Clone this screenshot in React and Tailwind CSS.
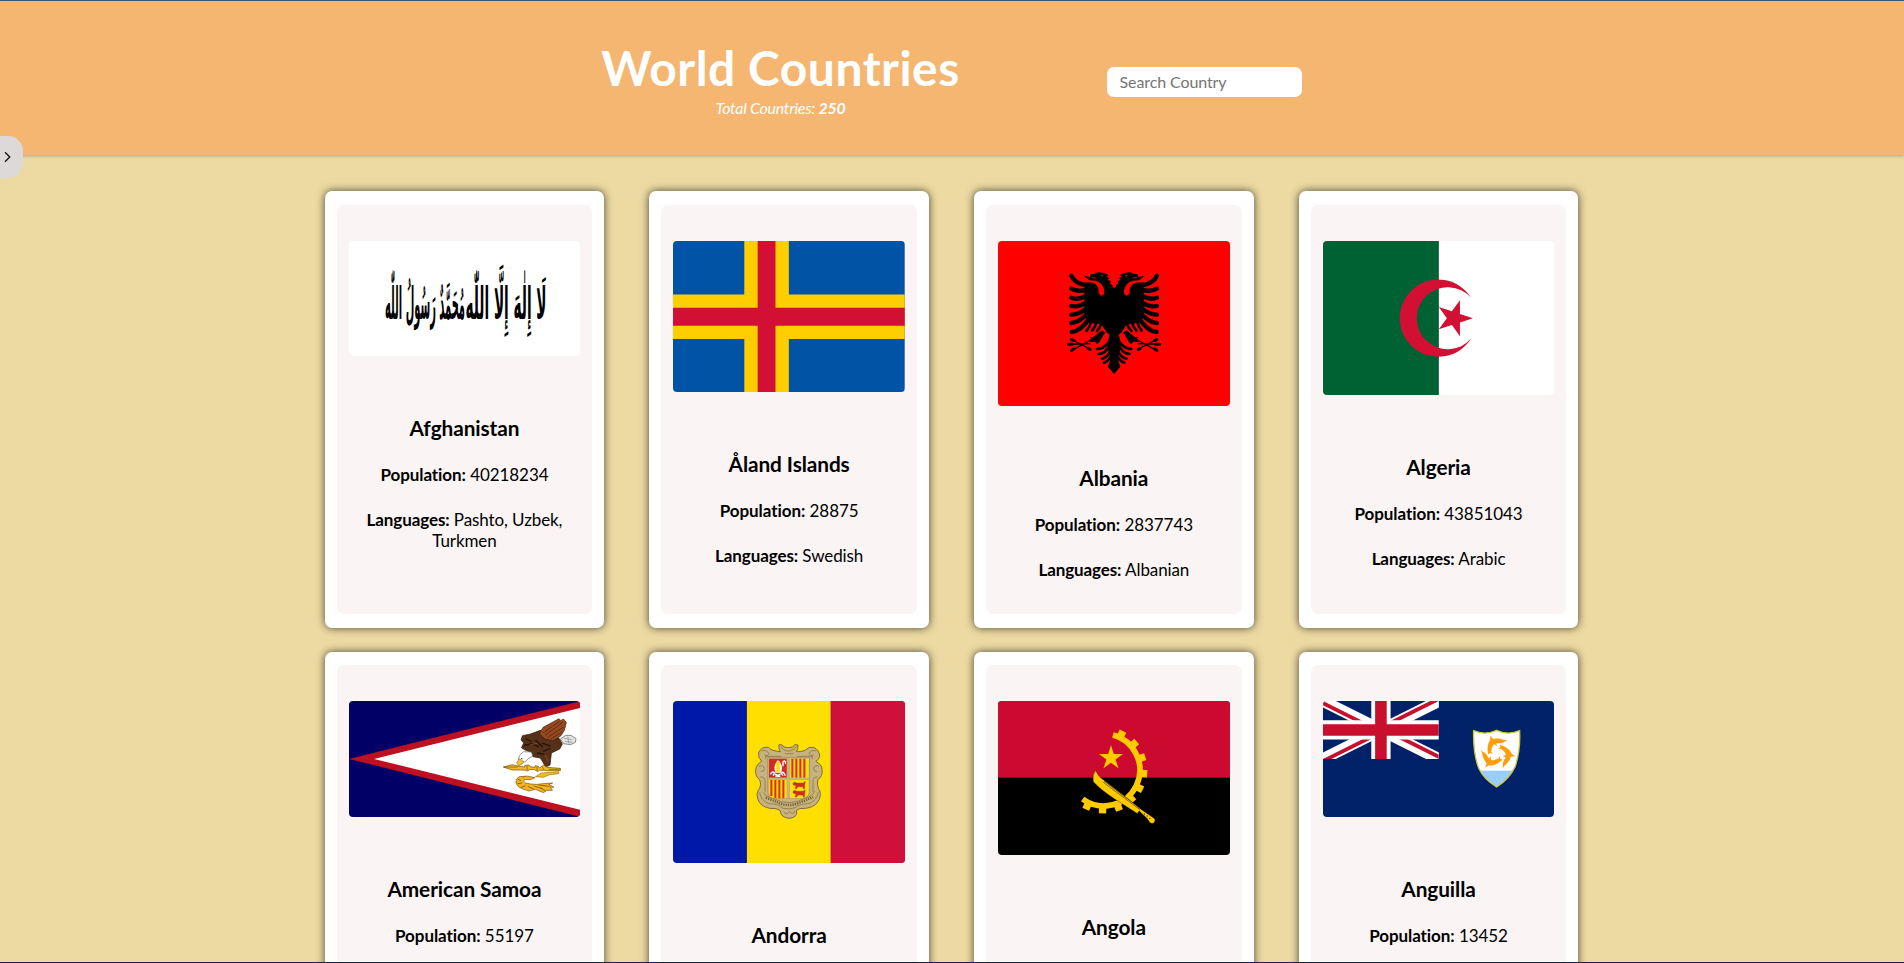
import React from "react";

const star = (cx, cy, r, start = -90) =>
  Array.from({ length: 10 }, (_, i) => {
    const a = ((start + i * 36) * Math.PI) / 180;
    const k = i % 2 ? r * 0.382 : r;
    return `${(cx + k * Math.cos(a)).toFixed(2)},${(cy + k * Math.sin(a)).toFixed(2)}`;
  }).join(" ");

function Flag({ height, children }) {
  return (
    <svg
      viewBox={`0 0 231.7 ${height}`}
      preserveAspectRatio="none"
      className="block w-full rounded-[4px]"
      style={{ height }}
    >
      {children}
    </svg>
  );
}

function Afghanistan() {
  return (
    <Flag height={115.4}>
      <rect width="231.7" height="116" fill="#fff" />
      <g
        fontFamily="'DejaVu Sans', sans-serif"
        fontSize="26"
        fontWeight="700"
        fill="#000"
        direction="rtl"
        textAnchor="middle"
      >
        <text transform="translate(157 78) scale(1 1.7)" textLength="81" lengthAdjust="spacingAndGlyphs">لَا إِلٰهَ إِلَّا اللّٰه</text>
        <text transform="translate(76 78) scale(1 1.7)" textLength="80" lengthAdjust="spacingAndGlyphs">مُحَمَّدٌ رَسُولُ اللّٰه</text>
      </g>
    </Flag>
  );
}

function Aland() {
  return (
    <Flag height={151.5}>
      <g transform="scale(8.9115)">
        <rect width="26" height="17" fill="#0053a5" />
        <path d="M8 0h5v17H8zM0 6h26v5H0z" fill="#ffce00" />
        <path d="M9.5 0h2v17h-2zM0 7.5h26v2H0z" fill="#d21034" />
      </g>
    </Flag>
  );
}

function EagleHalf() {
  return (
    <g>
      <path d="M134 82L158 83Q172 88 176 102Q173 118 184 122Q194 122 193 106Q189 84 168 77L148 76L131 62L150 66L152 58L163 57L175 51L195 55L206 61L199 64L208 70L203 73L213 80L209 85L218 91L217 95L223 100V236H203L184 208L142 203L132 170Z" />
      <g fill="none" stroke="#000" strokeLinecap="round">
        <g strokeWidth="13">
          <path d="M94 62Q104 86 142 92" />
          <path d="M94 101Q112 112 140 104" />
          <path d="M94 128Q112 137 140 122" />
          <path d="M94 153Q114 158 140 142" />
          <path d="M94 179Q116 180 142 158" />
          <path d="M94 204Q120 202 145 172" />
          <path d="M95 231Q126 226 147 190" />
        </g>
        <g strokeWidth="8">
          <path d="M140 227Q150 215 153 200" />
          <path d="M156 227Q167 215 169 200" />
          <path d="M171 228Q181 218 184 204" />
          <path d="M171 282Q190 282 206 262" />
          <path d="M176 297Q196 297 208 272" />
          <path d="M186 311Q203 308 212 286" />
          <path d="M192 323Q208 318 216 296" />
        </g>
        <path d="M84 268L150 266M92 288L155 254M92 252L152 283" strokeWidth="4" />
        <path d="M86 268h12M95 286l6-4M95 254l7 3M145 281l5 2" strokeWidth="9" />
      </g>
      <path d="M186 226L160 246L150 246L156 254L148 262L166 260L170 268L178 262L192 238L200 236Z" />
      <path d="M205 232Q210 240 204 256Q200 280 212 310L204 335L223 358V232Z" />
      <path d="M192 236Q204 230 208 240Q206 252 192 262Q186 258 192 236Z" fill="#f00" />
      <circle cx="186" cy="62" r="2.5" fill="#f00" />
      <path d="M154 68l14 1" stroke="#f00" strokeWidth="2.5" />
    </g>
  );
}

function Albania() {
  return (
    <Flag height={165.5}>
      <rect width="232" height="166" fill="#f00" />
      <g transform="translate(42 14) scale(.3333)">
        <EagleHalf />
        <g transform="translate(445 0) scale(-1 1)">
          <EagleHalf />
        </g>
      </g>
    </Flag>
  );
}

function Algeria() {
  return (
    <Flag height={154.4}>
      <rect width="232" height="155" fill="#fff" />
      <rect width="115.85" height="155" fill="#006233" />
      <path d="M148.1 56.8A38.6 38.6 0 1 0 148.1 97.6A31 31 0 1 1 148.1 56.8Z" fill="#d21034" />
      <polygon points={star(131.1, 77.2, 18.9, 0)} fill="#d21034" />
    </Flag>
  );
}

function AmericanSamoa() {
  return (
    <Flag height={115.9}>
      <rect width="232" height="116" fill="#006" />
      <path d="M0 57.9L231.7 0V115.9Z" fill="#bd1021" />
      <path d="M25 57.9L231.7 6.8V109Z" fill="#fff" />
      <g transform="translate(131.4 -11.3) scale(.3333)" strokeLinejoin="round">
        <path d="M240 148L256 137L272 137L287 147L285 158L270 165L250 162Z" fill="#e4e4e4" stroke="#555" strokeWidth="2" />
        <path d="M250 146l26 4M254 155l22 3M262 140l4 22" stroke="#888" strokeWidth="2" />
        <path d="M126 138L150 133L180 122L215 135L236 146L246 163L238 178L213 190L209 226L196 232L180 205L158 201L150 187L134 181L123 174L130 160L122 151Z" fill="#57301a" stroke="#25130a" strokeWidth="2" />
        <path d="M177 132L188 113L236 87L241 93L249 88L258 98L252 122L241 139L218 153L194 148Z" fill="#97491f" stroke="#3a1c0c" strokeWidth="2" />
        <path d="M188 130L238 94M194 137L247 98M202 143L250 112M212 147L246 126" stroke="#5e2d16" strokeWidth="3" />
        <path d="M135 147l18 9M130 168l24-6 22 10M165 150l22 22M185 160l25 9M188 185l22-9M170 190l22 4" fill="none" stroke="#25130a" strokeWidth="4" />
        <path d="M150 165l20-4M195 195l8 22" stroke="#8c4524" strokeWidth="3" />
        <path d="M130 186L153 187L157 199L143 207L136 216L124 218L113 210L119 195Z" fill="#fff" stroke="#666" strokeWidth="2" />
        <path d="M117 207L130 216L126 222L116 228L108 220Z" fill="#f6c22d" stroke="#71540b" strokeWidth="1.5" />
        <circle cx="124" cy="207" r="2" fill="#222" />
        <path d="M69 232L95 225L113 229L133 232V227L146 226L150 231L164 233V228L174 230L177 235L190 226L200 233L240 236V243H202L192 242L177 242L172 246L163 240L147 240L142 244L132 241H113L95 241Z" fill="#f5ba22" stroke="#6e4c08" strokeWidth="2" />
        <path d="M70 232H112M140 229v12M170 231v12M186 231l4 9M205 239h35" stroke="#6e4c08" strokeWidth="2" />
        <path d="M182 250L206 248L235 246V252L208 255L190 263L165 261Z" fill="#f5ba22" stroke="#7d5509" strokeWidth="1.5" />
        <path d="M164 264Q140 256 116 261Q104 268 107 280Q112 294 127 298L145 304L165 299L189 309L199 302L216 302L210 292L221 293L205 284L217 280L187 282L170 284L151 283L136 280Q126 276 132 269L150 270Z" fill="#f0b424" stroke="#7d5509" strokeWidth="2" />
        <path d="M112 268l10 5M111 282l14-2M122 293l14-5M142 290l18 8M160 289l26 8M174 286l34 4M180 294l16 10M128 264l4-5" stroke="#7d5509" strokeWidth="2.5" />
      </g>
    </Flag>
  );
}

function Andorra() {
  return (
    <Flag height={162.2}>
      <rect width="232" height="163" fill="#0018a8" />
      <rect x="73.9" width="83.9" height="163" fill="#fedf00" />
      <rect x="157.8" width="75" height="163" fill="#d0103a" />
      <g transform="translate(66.7 28.7) scale(.3333)">
        <path
          d="M118 45Q128 42 133 52Q146 56 158 52Q164 41 175 46Q176 58 170 66Q185 67 196 62Q206 50 222 53Q240 62 240 80Q236 92 228 95Q248 105 247 120Q250 140 234 150Q232 165 236 176Q247 190 238 210Q228 232 198 236Q178 234 170 242Q176 262 150 266Q122 264 122 243Q112 234 90 236Q62 230 55 210Q48 188 60 176Q66 164 60 150Q46 140 48 120Q50 104 66 95Q54 84 57 68Q66 50 86 53Q96 64 122 66Q115 56 118 45Z"
          fill="#c7b37f"
          stroke="#806a3c"
          strokeWidth="3"
        />
        <g fill="none" stroke="#8d7747" strokeWidth="2.5">
          <path d="M124 50Q130 64 148 64Q164 62 170 50M66 64Q80 58 88 72Q84 82 74 76M230 64Q216 58 208 72Q212 82 222 76M58 110Q70 104 74 116Q74 126 64 126M238 110Q226 104 222 116Q222 126 232 126M62 142Q76 140 76 156V186M234 142Q220 140 220 156V186M60 188Q62 212 88 222Q118 222 130 236Q150 240 166 234Q180 222 208 222Q232 212 236 186M72 188Q76 200 100 206Q148 232 196 206Q220 200 224 184M132 246Q140 258 150 246Q160 258 166 244" />
          <path d="M78 88V80H124M218 88V80H172M136 72h26" />
        </g>
        <path d="M78 204Q100 212 118 220Q148 232 176 220Q200 212 220 202" fill="none" stroke="#7a5e36" strokeWidth="7" strokeDasharray="4 3" />
        <path d="M84 83H210V188Q208 204 188 206H108Q86 206 84 188Z" fill="#c7b37f" stroke="#a08b57" strokeWidth="2" />
        <path d="M88 87H141V144H88Z" fill="#d52b1e" />
        <path d="M151 87H207V144H151ZM88 151H141V206H107Q90 205 88 188ZM151 151H207V188Q205 203 187 206H151Z" fill="#fedf00" />
        <path d="M158 87v57M170 87v57M182 87v57M194 87v57" stroke="#d52b1e" strokeWidth="6" />
        <path d="M95 151v48M107 151v54M119 151v55M131 151v55" stroke="#d52b1e" strokeWidth="6" />
        <path d="M115 91Q98 109 108 129H123Q134 109 115 91Z" fill="#fff" />
        <path d="M115 96V128" stroke="#fedf00" strokeWidth="11" />
        <path d="M92 134Q98 122 105 130L100 138M137 138Q130 122 124 130L130 138M130 110V96Q138 90 137 102M106 133L122 140M122 133L107 140" fill="none" stroke="#fff" strokeWidth="4" />
        <path d="M160 160l6-3 5 3h19l7-5-2 10v12h-5v-6h-15l-4 6h-5l3-9-9-3ZM160 185l6-3 5 3h19l7-5-2 10v12h-5v-6h-15l-4 6h-5l3-9-9-3Z" fill="#d52b1e" stroke="#8f4a10" strokeWidth="1" />
        <path d="M146 85V206M86 147.500H209" stroke="#c7b37f" strokeWidth="6" />
      </g>
    </Flag>
  );
}

const GEAR_TEETH = [-64, -41, -18, 5, 27, 47, 69, 92, 115];

function Angola() {
  return (
    <Flag height={153.5}>
      <rect width="232" height="155" fill="#000" />
      <rect width="232" height="76.7" fill="#cc092f" />
      <g transform="translate(62 8.7) scale(.3333)" fill="#ffcb00">
        <path d="M158.700 76.200A108 108 0 1 1 68 268" fill="none" stroke="#ffcb00" strokeWidth="17" />
        {GEAR_TEETH.map((a) => (
          <rect key={a} x="110" y="-11" width="20" height="22" transform={`translate(132 181) rotate(${a})`} />
        ))}
        <polygon points={star(153, 145, 38)} />
        <path
          d="M107 182Q96 196 100 216Q122 240 163 267L233 312L238 304L262 327L270 339Q282 345 285 334L284 327L271 318L245 300L205 268L132 212Q114 201 107 182Z"
          stroke="#000"
          strokeWidth="1"
        />
        <path d="M130 218L240 300M132 214L246 300M238 303L232 311" fill="none" stroke="#000" strokeWidth="1.5" />
        <path d="M252 313h3M260 319h3M268 326h3M261 311h3" stroke="#000" strokeWidth="3" />
      </g>
    </Flag>
  );
}

function Dolphin() {
  return (
    <path d="M534 194C530 178 532 160 540 151L540 138L549 148C562 145 574 148 581 151L592 152L582 156C578 162 566 160 558 161L560 170L553 164C544 168 545 178 543 186L548 193L540 190Z" />
  );
}

function Anguilla() {
  return (
    <Flag height={115.9}>
      <defs>
        <clipPath id="jack">
          <path d="M0 0h60v30H0z" />
        </clipPath>
        <clipPath id="jackSaltire">
          <path d="M30 15h30v15zM30 15v15H0zM30 15H0V0zM30 15V0h30z" />
        </clipPath>
        <clipPath id="shield">
          <path d="M490 123Q525 138 559 122Q593 138 628 123Q631 180 615 230Q597 268 559 292Q520 268 505 235Q488 190 490 123Z" />
        </clipPath>
      </defs>
      <rect width="232" height="116" fill="#012169" />
      <g transform="scale(1.9308)" clipPath="url(#jack)">
        <path d="M0 0L60 30M60 0L0 30" stroke="#fff" strokeWidth="6" />
        <path d="M0 0L60 30M60 0L0 30" clipPath="url(#jackSaltire)" stroke="#c8102e" strokeWidth="4" />
        <path d="M30 0v30M0 15h60" stroke="#fff" strokeWidth="10" />
        <path d="M30 0v30M0 15h60" stroke="#c8102e" strokeWidth="6" />
      </g>
      <g transform="translate(-12.7 -11.3) scale(.3333)">
        <g clipPath="url(#shield)">
          <rect x="480" y="110" width="160" height="190" fill="#fff" />
          <rect x="480" y="243" width="160" height="60" fill="#9cf" />
        </g>
        <path d="M490 123Q525 138 559 122Q593 138 628 123Q631 180 615 230Q597 268 559 292Q520 268 505 235Q488 190 490 123Z" fill="none" stroke="#c9c83a" strokeWidth="4" />
        <g fill="#ff9d0a">
          <Dolphin />
          <g transform="rotate(120 560 190)">
            <Dolphin />
          </g>
          <g transform="rotate(240 560 190)">
            <Dolphin />
          </g>
        </g>
      </g>
    </Flag>
  );
}

const countries = [
  { name: "Afghanistan", population: 40218234, languages: "Pashto, Uzbek, Turkmen", Flag: Afghanistan },
  { name: "Åland Islands", population: 28875, languages: "Swedish", Flag: Aland },
  { name: "Albania", population: 2837743, languages: "Albanian", Flag: Albania },
  { name: "Algeria", population: 43851043, languages: "Arabic", Flag: Algeria },
  { name: "American Samoa", population: 55197, languages: "English, Samoan", Flag: AmericanSamoa },
  { name: "Andorra", population: 77265, languages: "Catalan", Flag: Andorra },
  { name: "Angola", population: 32866268, languages: "Portuguese", Flag: Angola },
  { name: "Anguilla", population: 13452, languages: "English", Flag: Anguilla },
];

function CountryCard({ country }) {
  const { Flag: CountryFlag } = country;
  return (
    <article className="flex h-[436.4px] rounded-[7px] bg-white px-3 py-[13.6px] shadow-[0_0_8px_#000000b3]">
      <div className="flex w-full flex-col rounded-[7px] bg-[#faf4f4] px-3 pt-9 text-center text-black">
        <CountryFlag />
        <h2 className="mt-[59px] text-[20.8px] leading-[25px] font-bold tracking-[-0.08px]">{country.name}</h2>
        <p className="mt-[24px] text-[17px] leading-[21px] tracking-[-0.07px]">
          <b className="font-bold">Population:</b> {country.population}
        </p>
        <p className="mt-6 text-[17px] leading-[21px] tracking-[-0.1px]">
          <b className="font-bold">Languages:</b> {country.languages}
        </p>
      </div>
    </article>
  );
}

export default function App() {
  return (
    <div className="relative h-[963px] overflow-hidden border-y border-t-[#3f5372] border-b-[#16244a] bg-[#ecdaa2] font-[Lato,sans-serif] [font-variant-ligatures:none]">
      <header className="flex h-[154px] justify-center bg-[#f4b670] shadow-[0_1px_3px_#80808099]">
        <div className="mt-[38px] ml-[-1px] w-[359px] text-center text-white">
          <h1 className="text-[48px] leading-[58px] font-bold tracking-[0.5px] whitespace-nowrap">World Countries</h1>
          <p className="mt-[1px] text-[16px] leading-5 tracking-[-0.28px] italic">
            Total Countries: <b>250</b>
          </p>
        </div>
        <input
          className="mt-[66px] ml-[147px] h-[30px] w-[195px] rounded-[7px] bg-white px-[12.5px] pb-[2px] text-[16px] tracking-[-0.1px] text-black outline-none placeholder:text-[#757575]"
          placeholder="Search Country"
        />
      </header>

      <button className="absolute top-[135px] left-0 flex h-[42px] w-[23px] items-center rounded-r-[15px] bg-[#ddd9d9] pl-[4px]">
        <svg width="8" height="12" viewBox="0 0 8 12" fill="none" stroke="#111" strokeWidth="1.3">
          <path d="M1 1.200L5.800 6L1 10.800" />
        </svg>
      </button>

      <main className="mt-[36.3px] ml-[324.6px] grid w-[1253.8px] grid-cols-4 gap-x-[45px] gap-y-6">
        {countries.map((country) => (
          <CountryCard key={country.name} country={country} />
        ))}
      </main>
    </div>
  );
}
